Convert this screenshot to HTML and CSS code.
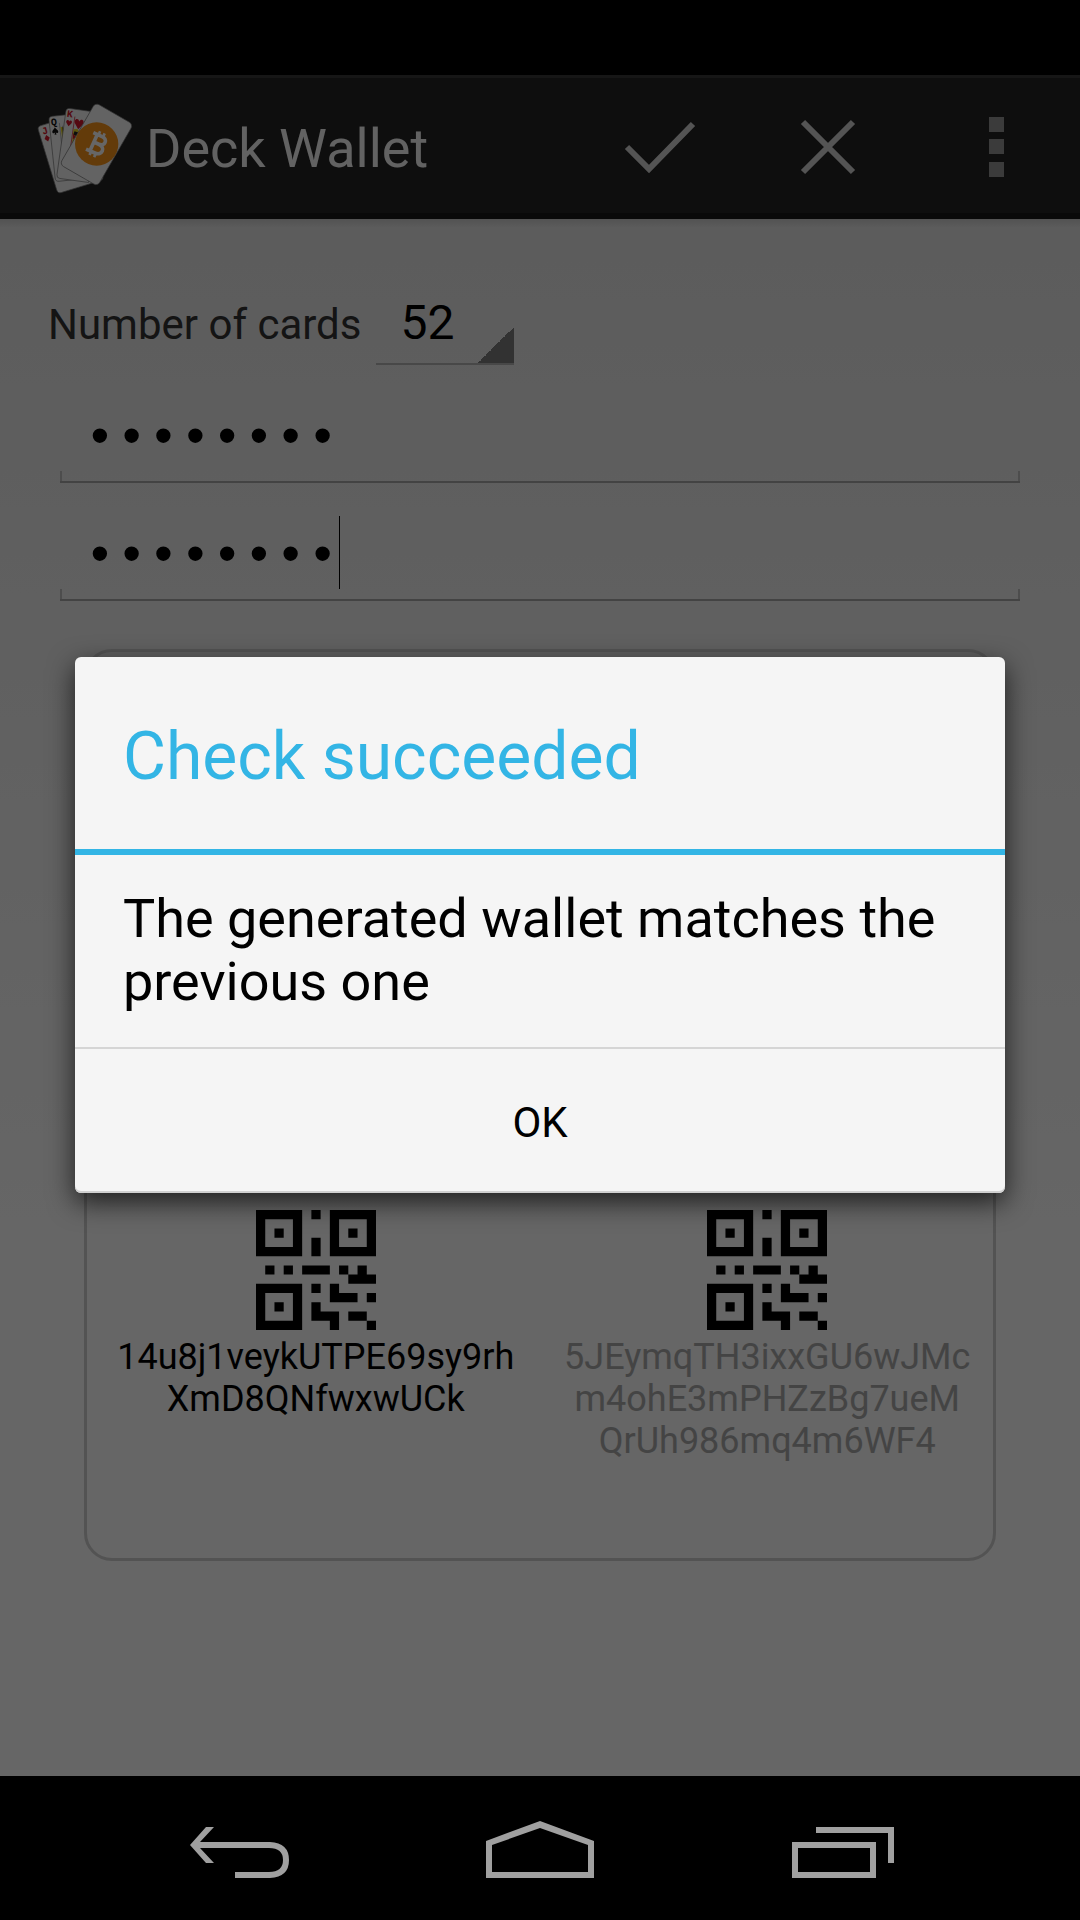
FILE: index.html
```html
<!DOCTYPE html>
<html lang="en">
<head>
<meta charset="utf-8">
<meta name="viewport" content="width=device-width, initial-scale=1">
<title>Deck Wallet</title>
<link rel="stylesheet" href="styles.css">
</head>
<body>
<div class="screen">
  <div class="status-bar"></div>
  <header class="action-bar">
    <svg class="logo" viewBox="0 0 330 315" aria-hidden="true">
      <g stroke="#777" stroke-width="2">
        <g transform="translate(22 95) rotate(-17)">
          <rect width="144" height="210" rx="11" fill="#f4f4f4"/>
          <text class="rank rank-red" x="9" y="28">J</text>
          <path d="M18 32l8 10-8 10-8-10z" fill="#d1182b" stroke="none"/>
          <path d="M32 32l12 4v32l-12-16z" fill="#e5d41f" stroke="none"/>
        </g>
        <g transform="translate(56 65) rotate(-6)">
          <rect width="144" height="196" rx="11" fill="#f4f4f4"/>
          <text class="rank rank-black" x="5" y="27">Q</text>
          <path d="M15 34c4 7 9 8 9 13 0 5-6 5-8 2l2 7h-6l2-7c-2 3-8 3-8-2 0-5 5-6 9-13z" fill="#111" stroke="none"/>
          <path d="M30 22v78" stroke="#999"/>
          <path d="M32 34l11 4-4 20 6 40-11-22z" fill="#e5d41f" stroke="none"/>
          <path d="M38 30l4 20-5 15zM34 68l6 10-5 10z" fill="#222" stroke="none"/>
        </g>
        <g transform="translate(109 39) rotate(8)">
          <path d="M11 0h86v212H10Q0 212 0 202V11Q0 0 11 0z" fill="#f4f4f4"/>
          <text class="rank rank-red" x="4" y="26">K</text>
          <path d="M14 53L6 43c-3-7 5-11 8-4 3-7 11-3 8 4z" fill="#d1182b" stroke="none"/>
          <path d="M29 22v95" stroke="#d1182b"/>
          <path d="M44 58L32 42c-6-12 8-20 12-7 4-13 18-5 12 7z" fill="#d1182b" stroke="none"/>
          <path d="M30 60l12-2 8 10-6 24-12 14z" fill="#e5d41f" stroke="none"/>
          <path d="M34 66l14 2-4 12-12-4z" fill="#222" stroke="none"/>
          <path d="M31 74l10 8-9 8z" fill="#d1182b" stroke="none"/>
        </g>
        <rect x="-65" y="-107" width="131" height="214" rx="13" transform="translate(199 148) rotate(30)" fill="#f8f8f8"/>
      </g>
      <circle cx="200" cy="147" r="65" fill="#f7931a"/>
      <g transform="translate(200 147) rotate(24)" fill="none" stroke="#fff" stroke-width="11">
        <path d="M-23-27H6C26-27 26-2 6-2H-10M6-2C30-2 30 27 6 27H-23M-10-27V27"/>
        <path d="M-6-39V-27M9-39V-27M-6 27V39M9 27V39" stroke-width="8"/>
      </g>
    </svg>
    <h1 class="app-title">Deck Wallet</h1>
    <button class="action" type="button" aria-label="Accept">
      <svg class="action-icon" viewBox="0 0 72 72" aria-hidden="true"><path d="M3 37l22 22 44-45" fill="none" stroke="#d2d2d2" stroke-width="6"/></svg>
    </button>
    <button class="action" type="button" aria-label="Cancel">
      <svg class="action-icon" viewBox="0 0 72 72" aria-hidden="true"><path d="M11 12l50 50M61 12L11 62" fill="none" stroke="#d2d2d2" stroke-width="6"/></svg>
    </button>
    <button class="action" type="button" aria-label="More options">
      <svg class="action-icon" viewBox="0 0 72 72" aria-hidden="true"><path d="M29 7h15v15H29zM29 29h15v15H29zM29 52h15v15H29z" fill="#949494"/></svg>
    </button>
  </header>

  <main class="content">
    <div class="count-row">
      <label class="count-label" for="count">Number of cards</label>
      <select class="count" id="count"><option>52</option></select>
    </div>
    <div class="field">
      <input class="password" type="password" value="deckpass" aria-label="Password">
    </div>
    <div class="field">
      <input class="password" type="password" value="deckpass" aria-label="Repeat password">
      <span class="caret"></span>
    </div>
    <section class="card">
      <div class="key">
        <svg class="qr" viewBox="0 0 13 13" role="img" aria-label="Address code"><path id="qr" fill-rule="evenodd" d="M0 0h5v5H0zM1 1v3h3V1zM2 2h1v1H2zM8 0h5v5H8zM9 1v3h3V1zM10 2h1v1h-1zM0 8h5v5H0zM1 9v3h3V9zM2 10h1v1H2zM6 0h1v1H6zM6 3h1v2H6zM1 6h1v1H1zM3 6h1v1H3zM5 6h3v1H5zM9 6h1v1H9zM11 6h1v1h1v1h-3V7h1zM6 8h1v1H6zM8 8h1v1h2v1H8zM12 9h1v1h-1zM6 10h1v1h2v2H8v-1H6zM10 11h2v1h-2zM12 12h1v1h-1z"/></svg>
        <p class="key-text">14u8j1veykUTPE69sy9rh<br>XmD8QNfwxwUCk</p>
      </div>
      <div class="key">
        <svg class="qr" viewBox="0 0 13 13" role="img" aria-label="Private key code"><use href="#qr"/></svg>
        <p class="key-text key-private">5JEymqTH3ixxGU6wJMc<br>m4ohE3mPHZzBg7ueM<br>QrUh986mq4m6WF4</p>
      </div>
    </section>
  </main>

  <div class="scrim">
    <dialog class="dialog" open aria-labelledby="dialog-title">
      <h2 class="dialog-title" id="dialog-title">Check succeeded</h2>
      <p class="dialog-message">The generated wallet matches the previous one</p>
      <button class="dialog-button" type="button">OK</button>
    </dialog>
  </div>
</div>

<nav class="nav-bar">
  <button class="nav-button" type="button" aria-label="Back">
    <svg class="nav-icon" viewBox="0 0 120 72" aria-hidden="true"><path d="M20 33L36 15h8L30 30h70Q119 31 119 48T100 66H65v-6h34q14 0 14-12T99 36H30l14 15h-8z" transform="translate(-10 0)"/></svg>
  </button>
  <button class="nav-button" type="button" aria-label="Home">
    <svg class="nav-icon" viewBox="0 0 120 72" aria-hidden="true"><path fill-rule="evenodd" d="M60 9l54 20v37H6V29zM60 16L12 33v27h96V33z"/></svg>
  </button>
  <button class="nav-button" type="button" aria-label="Recent apps">
    <svg class="nav-icon" viewBox="0 0 120 72" aria-hidden="true"><path fill-rule="evenodd" d="M12 30h84v36H12zM18 36v24h72V36zM36 15h78v36h-6V21H36z"/></svg>
  </button>
</nav>
</body>
</html>
```
FILE: styles.css
```css
* {
  box-sizing: border-box;
}

body {
  margin: 0;
  min-height: 100vh;
  display: flex;
  flex-direction: column;
  background: #000;
  color: #000;
  font-family: Roboto, "Noto Sans", sans-serif;
}

h1, h2, p {
  margin: 0;
  font-weight: 400;
}

button, select, input {
  font: inherit;
  color: inherit;
  border: 0;
  border-radius: 0;
  background: none;
  appearance: none;
  outline: none;
}

.screen {
  position: relative;
  flex: 1;
  display: flex;
  flex-direction: column;
}

.status-bar {
  height: 75px;
}

.action-bar {
  display: flex;
  align-items: center;
  height: 144px;
  padding-left: 30px;
  background: #232323;
  border-top: 3px solid #373737;
  border-bottom: 6px solid #171717;
}

.logo {
  width: 110px;
  height: 105px;
  margin-top: 3px;
}

.rank {
  font: bold 30px "Liberation Mono", monospace;
  stroke: none;
}

.rank-red {
  fill: #d1182b;
}

.rank-black {
  fill: #111;
}

.app-title {
  flex: 1;
  padding: 6px 0 0 6px;
  font-size: 54px;
  line-height: 63px;
  color: #f5f5f5;
}

.action {
  display: flex;
  align-items: center;
  justify-content: center;
  width: 168px;
  height: 100%;
  padding: 0;
}

.action-icon {
  width: 72px;
  height: 72px;
}

.content {
  flex: 1;
  padding: 72px 48px 48px;
  background:
    linear-gradient(rgba(0, 0, 0, 0.1), transparent) top / 100% 9px no-repeat,
    linear-gradient(#e6e6e6, #fefefe 1000px);
}

.count-row {
  display: flex;
  align-items: baseline;
  gap: 15px;
}

.count-label {
  font-size: 42px;
  color: #333;
}

.count {
  width: 138px;
  padding: 4px 24px 12px;
  font-size: 48px;
  line-height: 56px;
  border-bottom: 2px solid #b4b4b4;
  background: linear-gradient(135deg, transparent 50%, #7d7d7d 50%) right bottom / 36px 36px no-repeat;
}

.field {
  position: relative;
  margin: 0 12px;
}

.password {
  display: block;
  width: 100%;
  height: 118px;
  padding: 38px 24px 6px;
  font-family: "Liberation Mono", monospace;
  font-size: 53px;
  background:
    linear-gradient(#a8a8a8, #a8a8a8) bottom / 100% 2px no-repeat,
    linear-gradient(#c0c0c0, #c0c0c0) left bottom / 2px 12px no-repeat,
    linear-gradient(#c0c0c0, #c0c0c0) right bottom / 2px 12px no-repeat;
}

.caret {
  position: absolute;
  left: 279px;
  top: 33px;
  width: 1px;
  height: 73px;
  background: #000;
}

.card {
  display: flex;
  align-items: flex-end;
  margin: 48px 36px 0;
  padding: 0 0 96px 3px;
  aspect-ratio: 1;
  border: 3px solid #cfcfcf;
  border-radius: 28px;
}

.key {
  flex: 1;
  min-height: 252px;
  text-align: center;
}

.qr {
  display: block;
  width: 120px;
  height: 120px;
  margin: 0 auto 6px;
}

.key-text {
  font-size: 36px;
  line-height: 42px;
}

.key-private {
  color: #aaa;
}

.scrim {
  position: absolute;
  inset: 0;
  display: flex;
  align-items: center;
  justify-content: center;
  padding: 75px 75px 1px;
  background: rgba(0, 0, 0, 0.6);
}

.dialog {
  position: static;
  width: 100%;
  margin: 0;
  padding: 0;
  border: 0;
  border-radius: 6px;
  background: #f5f5f5;
  color: #000;
  box-shadow: 0 9px 27px rgba(0, 0, 0, 0.7), inset 0 -2px #d0d0d0;
}

.dialog-title {
  padding: 61px 48px 53px;
  font-size: 66px;
  line-height: 78px;
  color: #33b5e5;
  border-bottom: 6px solid #33b5e5;
}

.dialog-message {
  padding: 32px 48px 34px;
  font-size: 54px;
  line-height: 63px;
  border-bottom: 2px solid #d5d5d5;
}

.dialog-button {
  display: block;
  width: 100%;
  height: 144px;
  padding: 2px 0 0;
  font-size: 42px;
}

.nav-bar {
  display: flex;
  justify-content: center;
  height: 144px;
  padding: 0 90px;
}

.nav-button {
  flex: 1;
  display: flex;
  align-items: center;
  justify-content: center;
  padding: 0;
}

.nav-icon {
  width: 120px;
  height: 72px;
  fill: #a0a0a0;
}
```
